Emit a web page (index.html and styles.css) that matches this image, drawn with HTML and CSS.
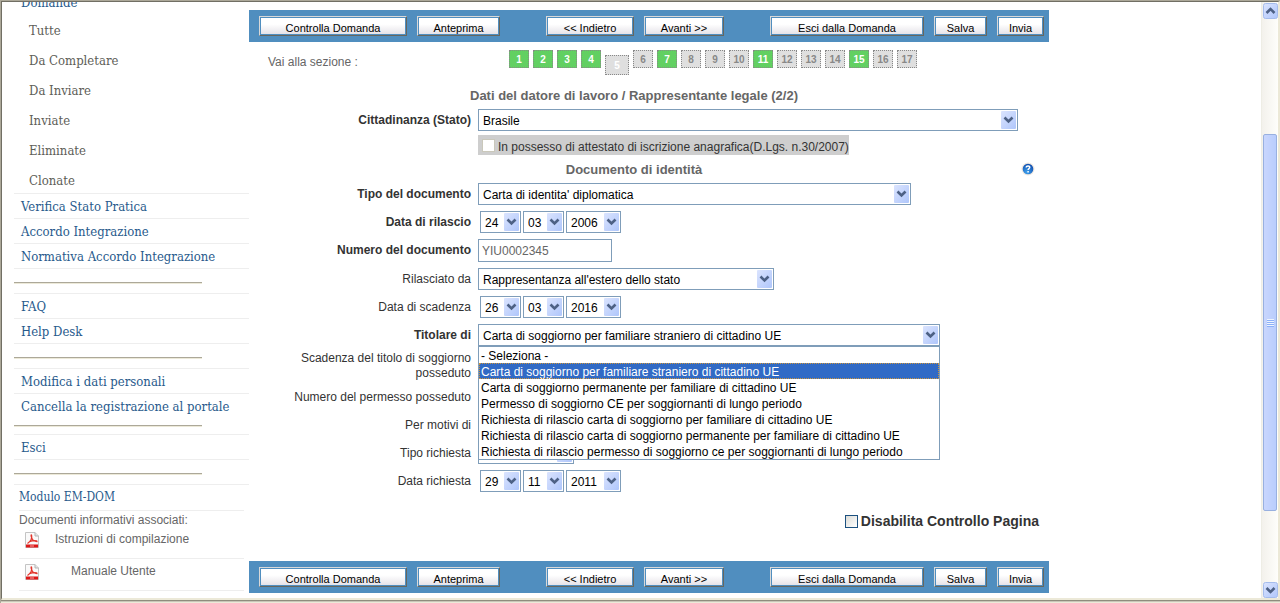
FILE: index.html
```html
<!DOCTYPE html>
<html lang="it">
<head>
<meta charset="utf-8">
<meta name="viewport" content="width=device-width, initial-scale=1">
<title>Dati del datore di lavoro</title>
<link rel="stylesheet" href="styles.css">
</head>
<body>
<svg class="symbols" aria-hidden="true">
  <defs>
    <linearGradient id="btn" x1="0" y1="0" x2="1" y2="1"><stop offset="0" stop-color="#dbe4fe"/><stop offset="1" stop-color="#afc6fb"/></linearGradient>
    <radialGradient id="ball" cx=".4" cy=".8" r=".8"><stop offset="0" stop-color="#3fa2ee"/><stop offset="1" stop-color="#0f4cae"/></radialGradient>
    <symbol id="arrow" viewBox="0 0 15 18">
      <rect width="15" height="18" rx="1" fill="url(#btn)"/>
      <path d="M3.500 6.500l4 4l4-4" fill="none" stroke="#4d6185" stroke-width="2.600"/>
    </symbol>
    <symbol id="pdf" viewBox="0 0 14 16">
      <path d="M.5 .5h9.500l3.500 3.500v11.500H.5z" fill="#fafafa" stroke="#c4c4c4"/>
      <path d="M10 .5V4h3.500" fill="#e4e4e4" stroke="#b5b5b5"/>
      <path d="M2.500 11.500C5.500 9.500 7.200 6 6.600 3.200C6.200 2 5.600 3.400 6.600 5.600C7.600 8.200 9.600 9.600 12 9.600C12.500 8.400 8 8.200 4.500 9.800" fill="none" stroke="#e2352b" stroke-width="1.200"/>
      <path d="M1 12.500h12V15.500H1z" fill="#dd1717"/>
      <path d="M5 14h4" stroke="#f7a5a5"/>
    </symbol>
  </defs>
</svg>
<div class="window">
  <nav class="sidebar">
    <ul class="menu">
      <li class="menu-head"><a href="#">Domande</a></li>
      <li class="menu-sub"><a href="#">Tutte</a></li>
      <li class="menu-sub"><a href="#">Da Completare</a></li>
      <li class="menu-sub"><a href="#">Da Inviare</a></li>
      <li class="menu-sub"><a href="#">Inviate</a></li>
      <li class="menu-sub"><a href="#">Eliminate</a></li>
      <li class="menu-sub menu-sub-last"><a href="#">Clonate</a></li>
      <li class="menu-item"><a href="#">Verifica Stato Pratica</a></li>
      <li class="menu-item"><a href="#">Accordo Integrazione</a></li>
      <li class="menu-item"><a href="#">Normativa Accordo Integrazione</a></li>
      <li class="menu-item"><hr class="rule"></li>
      <li class="menu-item"><a href="#">FAQ</a></li>
      <li class="menu-item"><a href="#">Help Desk</a></li>
      <li class="menu-item"><hr class="rule"></li>
      <li class="menu-item"><a href="#">Modifica i dati personali</a></li>
      <li class="menu-item menu-tall"><a href="#">Cancella la registrazione al portale</a><hr class="rule"></li>
      <li class="menu-item"><a href="#">Esci</a></li>
      <li class="menu-item"><hr class="rule"></li>
    </ul>
    <section class="docs">
      <h2 class="docs-title"><a href="#">Modulo EM-DOM</a></h2>
      <p class="docs-note">Documenti informativi associati:</p>
      <a class="doc" href="#"><svg class="pdf" aria-hidden="true"><use href="#pdf"/></svg><span>Istruzioni di compilazione</span></a>
      <a class="doc doc-manual" href="#"><svg class="pdf" aria-hidden="true"><use href="#pdf"/></svg><span>Manuale Utente</span></a>
    </section>
  </nav>

  <main class="content">
    <div class="actions">
      <div class="group"><button type="button" class="w-check">Controlla Domanda</button><button type="button" class="w-preview">Anteprima</button></div>
      <div class="group"><button type="button" class="w-back">&lt;&lt; Indietro</button><button type="button" class="w-next">Avanti &gt;&gt;</button></div>
      <div class="group"><button type="button" class="w-exit">Esci dalla Domanda</button><button type="button" class="w-save">Salva</button><button type="button" class="w-send">Invia</button></div>
    </div>

    <div class="sections">
      <span class="sections-label">Vai alla sezione :</span>
      <nav class="steps">
        <a class="step done" href="#">1</a><a class="step done" href="#">2</a><a class="step done" href="#">3</a><a class="step done" href="#">4</a><a class="step current" href="#">5</a><a class="step" href="#">6</a><a class="step done" href="#">7</a><a class="step" href="#">8</a><a class="step" href="#">9</a><a class="step" href="#">10</a><a class="step done" href="#">11</a><a class="step" href="#">12</a><a class="step" href="#">13</a><a class="step" href="#">14</a><a class="step done" href="#">15</a><a class="step" href="#">16</a><a class="step" href="#">17</a>
      </nav>
    </div>

    <form class="form">
      <h1 class="heading">Dati del datore di lavoro / Rappresentante legale (2/2)</h1>
      <div class="field required">
        <label for="stato">Cittadinanza (Stato)</label>
        <span class="select w-540"><select id="stato"><option>Brasile</option></select><svg aria-hidden="true"><use href="#arrow"/></svg></span>
      </div>
      <div class="attest">
        <label class="attest-box"><input type="checkbox" disabled><span>In possesso di attestato di iscrizione anagrafica(D.Lgs. n.30/2007)</span></label>
      </div>
      <div class="heading-row">
        <h2 class="heading">Documento di identità</h2>
        <button type="button" class="help" aria-label="Aiuto">
          <svg viewBox="0 0 14 14" aria-hidden="true"><circle cx="7" cy="7" r="6.500" fill="#eee7df"/><circle cx="7" cy="7" r="5.300" fill="url(#ball)"/><path d="M5.200 5.600C5.200 3.300 9 3.400 8.700 5.500C8.600 6.600 7.100 6.700 7.100 8M7.100 9v1.500" fill="none" stroke="#fff" stroke-width="1.500"/></svg>
        </button>
      </div>
      <div class="field required">
        <label for="tipo">Tipo del documento</label>
        <span class="select w-433"><select id="tipo"><option>Carta di identita' diplomatica</option></select><svg aria-hidden="true"><use href="#arrow"/></svg></span>
      </div>
      <div class="field required">
        <label for="ril-g">Data di rilascio</label>
        <span class="date">
          <span class="select w-day"><select id="ril-g"><option>24</option></select><svg aria-hidden="true"><use href="#arrow"/></svg></span>
          <span class="select w-day"><select aria-label="Mese di rilascio"><option>03</option></select><svg aria-hidden="true"><use href="#arrow"/></svg></span>
          <span class="select w-year"><select aria-label="Anno di rilascio"><option>2006</option></select><svg aria-hidden="true"><use href="#arrow"/></svg></span>
        </span>
      </div>
      <div class="field field-text required">
        <label for="numero">Numero del documento</label>
        <input class="text" id="numero" type="text" value="YIU0002345">
      </div>
      <div class="field">
        <label for="da">Rilasciato da</label>
        <span class="select w-296"><select id="da"><option>Rappresentanza all'estero dello stato</option></select><svg aria-hidden="true"><use href="#arrow"/></svg></span>
      </div>
      <div class="field">
        <label for="sca-g">Data di scadenza</label>
        <span class="date">
          <span class="select w-day"><select id="sca-g"><option>26</option></select><svg aria-hidden="true"><use href="#arrow"/></svg></span>
          <span class="select w-day"><select aria-label="Mese di scadenza"><option>03</option></select><svg aria-hidden="true"><use href="#arrow"/></svg></span>
          <span class="select w-year"><select aria-label="Anno di scadenza"><option>2016</option></select><svg aria-hidden="true"><use href="#arrow"/></svg></span>
        </span>
      </div>
      <div class="field required">
        <label for="titolare">Titolare di</label>
        <span class="select w-462"><select id="titolare"><option>Carta di soggiorno per familiare straniero di cittadino UE</option></select><svg aria-hidden="true"><use href="#arrow"/></svg>
          <ul class="options" role="listbox" aria-label="Titolare di">
            <li role="option">- Seleziona -</li>
            <li role="option" class="active" aria-selected="true">Carta di soggiorno per familiare straniero di cittadino UE</li>
            <li role="option">Carta di soggiorno permanente per familiare di cittadino UE</li>
            <li role="option">Permesso di soggiorno CE per soggiornanti di lungo periodo</li>
            <li role="option">Richiesta di rilascio carta di soggiorno per familiare di cittadino UE</li>
            <li role="option">Richiesta di rilascio carta di soggiorno permanente per familiare di cittadino UE</li>
            <li role="option">Richiesta di rilascio permesso di soggiorno ce per soggiornanti di lungo periodo</li>
          </ul>
        </span>
      </div>
      <div class="field field-double"><span class="label">Scadenza del titolo di soggiorno posseduto</span></div>
      <div class="field"><span class="label">Numero del permesso posseduto</span></div>
      <div class="field"><span class="label">Per motivi di</span></div>
      <div class="field">
        <label for="richiesta">Tipo richiesta</label>
        <span class="select w-96"><select id="richiesta"><option></option></select><svg aria-hidden="true"><use href="#arrow"/></svg></span>
      </div>
      <div class="field">
        <label for="ric-g">Data richiesta</label>
        <span class="date">
          <span class="select w-day"><select id="ric-g"><option>29</option></select><svg aria-hidden="true"><use href="#arrow"/></svg></span>
          <span class="select w-day"><select aria-label="Mese richiesta"><option>11</option></select><svg aria-hidden="true"><use href="#arrow"/></svg></span>
          <span class="select w-year"><select aria-label="Anno richiesta"><option>2011</option></select><svg aria-hidden="true"><use href="#arrow"/></svg></span>
        </span>
      </div>
      <label class="disable"><input type="checkbox"><span>Disabilita Controllo Pagina</span></label>
    </form>

    <div class="actions">
      <div class="group"><button type="button" class="w-check">Controlla Domanda</button><button type="button" class="w-preview">Anteprima</button></div>
      <div class="group"><button type="button" class="w-back">&lt;&lt; Indietro</button><button type="button" class="w-next">Avanti &gt;&gt;</button></div>
      <div class="group"><button type="button" class="w-exit">Esci dalla Domanda</button><button type="button" class="w-save">Salva</button><button type="button" class="w-send">Invia</button></div>
    </div>
  </main>

  <div class="scrollbar" aria-hidden="true">
    <svg class="scroll-btn" viewBox="0 0 15 16"><rect x=".5" y=".5" width="14" height="15" rx="2" fill="url(#btn)" stroke="#a5bcec"/><path d="M3.500 10l4-4l4 4" fill="none" stroke="#4d6185" stroke-width="2.600"/></svg>
    <div class="before"></div>
    <div class="thumb"><i></i><i></i><i></i><i></i></div>
    <div class="after"></div>
    <svg class="scroll-btn" viewBox="0 0 15 16"><rect x=".5" y=".5" width="14" height="15" rx="2" fill="url(#btn)" stroke="#a5bcec"/><path d="M3.500 6l4 4l4-4" fill="none" stroke="#4d6185" stroke-width="2.600"/></svg>
  </div>
</div>
</body>
</html>
```
FILE: styles.css
```css
* { box-sizing: border-box; }
body {
  margin: 0;
  height: 100vh;
  overflow: hidden;
  border-top: 1px solid #aca899;
  border-left: 1px solid #aca899;
  background: #ece9d8;
  font: 12px/15px "Liberation Sans", Arial, sans-serif;
  color: #333;
}
ul { margin: 0; padding: 0; list-style: none; }
a { color: inherit; text-decoration: none; }
.symbols { position: absolute; width: 0; height: 0; }

.window {
  display: flex;
  height: calc(100vh - 4px);
  border-top: 1px solid #716f64;
  border-left: 1px solid #716f64;
  border-right: 2px solid #ece9d8;
  border-bottom: 2px solid #ece9d8;
  box-shadow: 0 1px 0 #8f8c7d, 0 2px 0 #c9c6b8;
  background: #fff;
  overflow: hidden;
}

/* Side menu */
.sidebar {
  flex: 0 0 247px;
  padding-left: 12px;
  font-family: "DejaVu Serif Condensed", "DejaVu Serif", serif;
  font-size: 13px;
}
.menu { color: #285a8c; }
.menu-head {
  display: flex;
  align-items: flex-end;
  height: 14px;
  padding: 0 7px 6px;
  overflow: hidden;
}
.menu-sub {
  height: 30px;
  padding-left: 15px;
  line-height: 30px;
  color: #5e5e58;
}
.menu-sub-last { height: 28px; border-bottom: 1px solid #eee; }
.menu-item {
  display: flow-root;
  height: 25px;
  padding-left: 7px;
  border-bottom: 1px solid #eee;
  line-height: 25px;
}
.menu-item.menu-tall { height: 41px; }
.rule {
  width: 188px;
  height: 2px;
  margin: 13px 0 0 -7px;
  border: 0;
  border-top: 1px solid #aca899;
  border-bottom: 1px solid #ece9d8;
}
.menu-tall .rule { margin-top: 6px; }
.docs {
  padding: 0 5px;
  font: 12px/14px "Liberation Sans", Arial, sans-serif;
  color: #666;
}
.docs-title {
  height: 26px;
  margin: 0;
  border-bottom: 1px solid #eee;
  font: 12px/25px "DejaVu Serif Condensed", "DejaVu Serif", serif;
  color: #285a8c;
}
.docs-note { margin: 2px 0 0; }
.doc {
  display: flex;
  gap: 16px;
  height: 32px;
  padding: 5px 0 0 6px;
  border-bottom: 1px solid #eee;
}
.doc-manual { gap: 32px; }
.pdf { width: 14px; height: 16px; }

/* Main column */
.content {
  display: flex;
  flex-direction: column;
  flex: 0 1 800px;
  padding: 8px 0 5px;
}
.actions {
  display: flex;
  justify-content: space-between;
  height: 32px;
  padding: 6px 5px 6px 10px;
  background: #508ebf;
}
.group { display: flex; gap: 10px; }
.group button {
  height: 20px;
  padding: 3px 0 0;
  border: 1px solid;
  border-color: #d8d8d8 #66665e #66665e #d8d8d8;
  box-shadow: inset 0 0 0 1px #508ebf;
  background: linear-gradient(#fff 40%, #e3e0e6);
  font: 11px/14px "Liberation Sans", Arial, sans-serif;
  color: #000;
}
.w-check { width: 148px; }
.w-preview { width: 83px; }
.w-back { width: 88px; }
.w-next { width: 80px; }
.w-exit { width: 154px; }
.w-save { width: 53px; }
.w-send { width: 47px; }

.sections {
  display: flex;
  height: 42px;
  padding: 8px 0 0 19px;
  color: #666;
}
.sections-label { width: 241px; padding-top: 5px; }
.steps { display: flex; align-items: flex-start; gap: 4px; }
.step {
  width: 20px;
  height: 18px;
  border: 1px dotted #888;
  background: #dfdfdf;
  font: bold 10px/18px "Liberation Sans", Arial, sans-serif;
  text-align: center;
  color: #888;
}
.step.done { background: #62d062; color: #fff; }
.step.current {
  width: 24px;
  height: 20px;
  margin-top: 5px;
  line-height: 20px;
  color: #fff;
}

/* Form */
.form { display: flex; flex-direction: column; flex: 1; }
.heading {
  margin: 0;
  padding: 2px 30px 0 0;
  font: bold 13px/20px "Liberation Sans", Arial, sans-serif;
  text-align: center;
  color: #666;
}
.field {
  display: grid;
  grid-template-columns: 222px 1fr;
  column-gap: 7px;
  align-items: center;
  height: 28px;
}
.field-text { height: 29px; }
.field-double { height: 34px; }
.field label, .label { text-align: right; }
.field-double .label { padding-left: 20px; }
.required label { font-weight: bold; }
.date { display: flex; gap: 2px; padding-left: 2px; }
.select { position: relative; display: block; max-width: 100%; height: 22px; }
.select select {
  appearance: none;
  display: block;
  width: 100%;
  height: 22px;
  padding: 2px 20px 0 4px;
  border: 1px solid #7f9db9;
  border-radius: 0;
  background: #fff;
  font: 12px/18px "Liberation Sans", Arial, sans-serif;
  color: #000;
}
.date select { padding-right: 0; }
.select svg {
  position: absolute;
  top: 2px;
  right: 2px;
  width: 15px;
  height: 18px;
  pointer-events: none;
}
.w-540 { width: 540px; }
.w-462 { width: 462px; }
.w-433 { width: 433px; }
.w-296 { width: 296px; }
.w-96 { width: 96px; }
.w-day { width: 41px; }
.w-year { width: 55px; }
.text {
  width: 134px;
  height: 23px;
  padding: 0 3px;
  border: 1px solid #7f9db9;
  font: 12px/20px "Liberation Sans", Arial, sans-serif;
  color: #666;
}
.options {
  position: absolute;
  z-index: 2;
  top: 22px;
  left: 0;
  width: 100%;
  border: 1px solid #7f9db9;
  background: #fff;
  color: #000;
}
.options li {
  height: 16px;
  padding-left: 2px;
  line-height: 18px;
  white-space: nowrap;
}
.options .active {
  background: #316ac5;
  outline: 1px dotted #ce953a;
  outline-offset: -1px;
  color: #fff;
}
.attest { height: 24px; padding: 1px 0 0 229px; }
.attest-box {
  display: inline-flex;
  align-items: center;
  gap: 3px;
  height: 20px;
  padding-left: 4px;
  background: #cecece;
  line-height: 20px;
}
.attest-box span { padding-top: 3px; }
input[type="checkbox"] {
  appearance: none;
  width: 13px;
  height: 13px;
  margin: 0;
  border: 1px solid #1c5180;
  background: linear-gradient(135deg, #dcdcd7, #fff);
}
.attest-box input[type="checkbox"] { border-color: #cac8bb; background: #fff; }
.heading-row {
  display: grid;
  grid-template-columns: 1fr;
  align-items: center;
}
.heading-row > * { grid-area: 1 / 1; }
.help {
  justify-self: end;
  width: 14px;
  height: 14px;
  margin-right: 14px;
  padding: 0;
  border: 0;
  background: none;
}
.help svg { display: block; }
.disable {
  display: flex;
  align-items: center;
  align-self: flex-end;
  gap: 3px;
  margin: 19px 10px 0 0;
  font-size: 14px;
  font-weight: bold;
}

/* Window scroll bar */
.scrollbar {
  display: flex;
  flex-direction: column;
  width: 17px;
  margin-left: auto;
  padding: 1px 1px 0;
  border-left: 1px solid #eeede5;
  background: linear-gradient(90deg, #f3f1ec, #fefefb);
}
.scroll-btn { width: 15px; height: 16px; }
.before { flex: 115; }
.after { flex: 71; }
.thumb {
  display: flex;
  flex-direction: column;
  align-items: center;
  justify-content: center;
  gap: 1px;
  flex: 377;
  border: 1px solid #98b0e0;
  border-radius: 2px;
  background: linear-gradient(90deg, #c9d6fd, #b9cdfd);
}
.thumb i { width: 7px; height: 1px; background: #eef4fe; box-shadow: 0 1px 0 #8cb0f8; }
```
